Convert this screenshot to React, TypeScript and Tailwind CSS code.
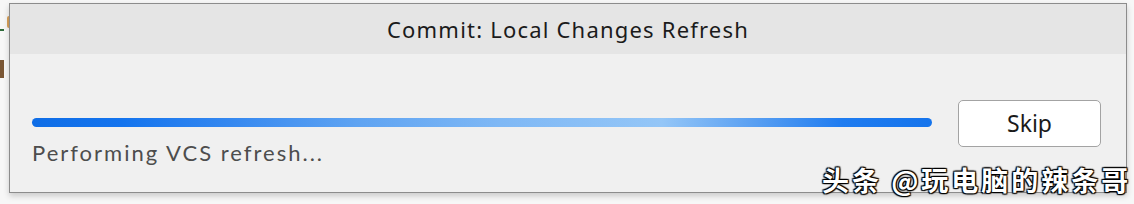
import React from "react";

export default function App() {
  return (
    <div className="relative w-[1134px] h-[204px] bg-[#f7f7f7] overflow-hidden" style={{ fontFamily: '"Open Sans", "Noto Sans", sans-serif' }}>
      {/* background artifacts on the left */}
      <div className="absolute left-[7px] top-[16px] w-[4px] h-[12px] rounded-full bg-[#d9a15a]" />
      <div className="absolute left-0 top-[29px] w-[4px] h-[2px] bg-[#2f6b3a]" />
      <div className="absolute left-0 top-[60px] w-[4px] h-[18px] bg-[#7a5634]" />

      <div className="absolute left-[9px] top-[3px] w-[1118px] h-[190px] border border-[#8c8c8c] bg-[#f0f0f0] shadow-[0_3px_6px_rgba(0,0,0,0.18)] flex flex-col">
        <div className="h-[50px] bg-[#e5e5e5] flex items-center justify-center">
          <span className="text-[22px] text-[#1b1b1b] tracking-[1.2px] pt-[1px]" style={{ fontFamily: '"Noto Sans", "Open Sans", sans-serif' }}>
            Commit: Local Changes Refresh
          </span>
        </div>
        <div className="flex-1 flex items-start pl-[22px] pr-[24px] pt-[46px]">
          <div className="w-[900px] flex flex-col">
            <div className="h-[9px] mt-[18px] rounded-full bg-[linear-gradient(90deg,#0f6de6_0%,#1474ee_10%,#3588f0_22%,#5ea3f2_36%,#7fb8f5_52%,#94c6f7_70%,#5aa0f2_80%,#1f7cf0_90%,#1574ec_100%)]" />
            <div className="mt-[13px] text-[22px] text-[#4d4d4d] leading-[26px] tracking-[2px]" style={{ fontFamily: '"Lato", "Open Sans", sans-serif' }}>
              Performing VCS refresh...
            </div>
          </div>
          <div className="ml-[26px] w-[143px] h-[47px] rounded-[5px] border border-[#a3a3a3] bg-white flex items-center justify-center">
            <span className="text-[23px] text-[#1a1a1a]" style={{ fontFamily: '"Noto Sans", sans-serif' }}>Skip</span>
          </div>
        </div>
      </div>

      <div
        className="absolute left-[822px] top-[164px] text-[27px] leading-[32px] font-bold tracking-[3px] text-white [text-shadow:0_0_2px_#000,1px_1px_1px_#000,-1px_-1px_1px_#000,1px_-1px_1px_#000,-1px_1px_1px_#000]"
        style={{ fontFamily: '"Noto Sans CJK SC", sans-serif' }}
      >
        头条 @玩电脑的辣条哥
      </div>
    </div>
  );
}
